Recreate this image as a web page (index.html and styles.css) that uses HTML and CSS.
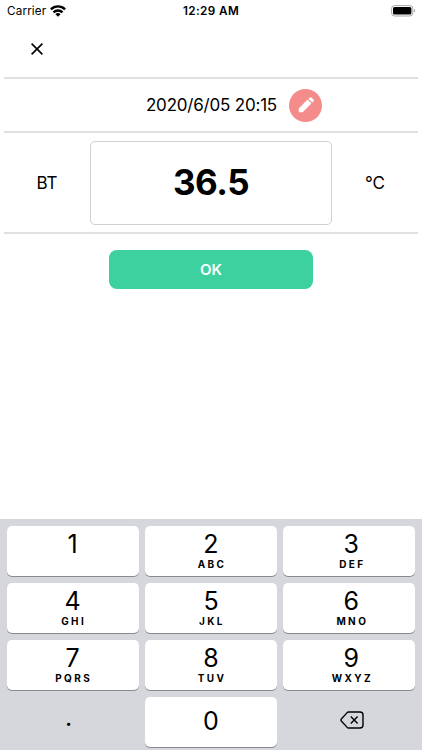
FILE: index.html
```html
<!DOCTYPE html>
<html lang="en">

<head>
    <meta charset="UTF-8">
    <meta name="viewport" content="width=device-width, initial-scale=1.0">
    <title>Body temperature</title>
    <link rel="stylesheet" href="styles.css">
</head>

<body>
    <div class="status">
        <div class="carrier">
            <span>Carrier</span>
            <svg width="16" height="12" viewBox="0 0 16 12" fill="none" stroke="#000" stroke-width="2.4">
                <path d="M.9 4.3a10.2 10.2 0 0 1 14.2 0" />
                <path d="M3.5 7.3a6.4 6.4 0 0 1 9 0" />
                <path d="M8 11.8L5.4 9.3a3.7 3.7 0 0 1 5.2 0z" fill="#000" stroke="none" />
            </svg>
        </div>
        <div class="time">12:29 AM</div>
        <div class="battery">
            <svg width="25" height="12" viewBox="0 0 25 12">
                <rect x=".6" y=".6" width="21.2" height="10.4" rx="3" fill="#fff" stroke="#a5a5a5" />
                <rect x="2" y="2" width="18.4" height="7.6" rx="1.6" fill="#000" />
                <path d="M23 4.1c1.6.6 1.6 2.9 0 3.5z" fill="#a5a5a5" />
            </svg>
        </div>
    </div>
    <div class="container">
        <div class="header">
            <button class="close" aria-label="Close">
                <svg width="12" height="12" viewBox="0 0 12 12" fill="none" stroke="#000" stroke-width="1.6">
                    <path d="M.6.6l10.8 10.8M11.4.6L.6 11.4" />
                </svg>
            </button>
        </div>
        <div class="date">
            <span>2020/6/05 20:15</span>
            <button class="edit" aria-label="Edit">
                <svg width="16" height="16" viewBox="0 0 16 16" fill="#fff">
                    <path d="M.8 11.4L9.6 2.6l3.8 3.8-8.8 8.8H.8z" />
                    <path d="M10.5 1.7l.9-.9a1.7 1.7 0 0 1 2.4 0l1.4 1.4a1.7 1.7 0 0 1 0 2.4l-.9.9z" />
                </svg>
            </button>
        </div>
        <div class="entry">
            <span class="label">BT</span>
            <div class="value">36.5</div>
            <span class="label">°C</span>
        </div>
        <button class="ok">OK</button>
    </div>
    <div class="keyboard">
        <button class="key">1</button>
        <button class="key">2<small>ABC</small></button>
        <button class="key right">3<small>DEF</small></button>
        <button class="key">4<small>GHI</small></button>
        <button class="key">5<small>JKL</small></button>
        <button class="key right">6<small>MNO</small></button>
        <button class="key">7<small>PQRS</small></button>
        <button class="key">8<small>TUV</small></button>
        <button class="key right">9<small>WXYZ</small></button>
        <button class="key plain dot">.</button>
        <button class="key zero">0</button>
        <button class="key plain delete" aria-label="Delete">
            <svg width="24" height="18" viewBox="0 0 24 18" fill="none" stroke="#000" stroke-width="1.4" stroke-linejoin="round">
                <path d="M8.6 1H20a3 3 0 0 1 3 3v10a3 3 0 0 1-3 3H8.6a2 2 0 0 1-1.4-.6L1.3 10a1.4 1.4 0 0 1 0-2l5.9-6.4A2 2 0 0 1 8.6 1z" />
                <path d="M10.8 5.6l6.8 6.8M17.6 5.6l-6.8 6.8" />
            </svg>
        </button>
    </div>
</body>

</html>
```
FILE: styles.css
```css
* {
    padding: 0;
    margin: 0;
    box-sizing: border-box;
}

body {
    height: 100vh;
    display: flex;
    flex-direction: column;
    overflow: hidden;
    background: #fff;
    color: #000;
    font-family: Inter, "Liberation Sans", sans-serif;
}

button {
    border: none;
    background: none;
    color: inherit;
    font-family: inherit;
    cursor: pointer;
}

svg {
    display: block;
}

.status {
    height: 22px;
    display: grid;
    grid-template-columns: 1fr auto 1fr;
    align-items: center;
    padding: 0 6px 0 7px;
    font-size: 11.7px;
}

.status .carrier {
    display: flex;
    align-items: center;
    gap: 4px;
    letter-spacing: 0.15px;
}

.status .time {
    padding-right: 1px;
    font-weight: 600;
    letter-spacing: 0.4px;
}

.status .battery {
    justify-self: end;
}

.container {
    flex: 1;
    display: flex;
    flex-direction: column;
    padding: 0 4px;
}

.container .header {
    height: 57px;
    display: flex;
    align-items: center;
    padding: 0 0 1px 26px;
    border-bottom: 2px solid #dfe0e2;
}

.container .close {
    padding: 1px;
}

.container .date {
    height: 54px;
    display: flex;
    align-items: center;
    justify-content: flex-end;
    gap: 12px;
    padding-right: 96px;
    border-bottom: 2px solid #dfe0e2;
    font-size: 17px;
    letter-spacing: -0.2px;
}

.container .edit {
    width: 33px;
    height: 33px;
    display: flex;
    align-items: center;
    justify-content: center;
    border-radius: 50%;
    background: #f48c8c;
}

.container .entry {
    height: 101px;
    display: grid;
    grid-template-columns: 86px 242px 86px;
    align-items: center;
    border-bottom: 2px solid #dfe0e2;
    text-align: center;
    font-size: 17px;
}

.container .entry .value {
    height: 84px;
    display: flex;
    align-items: center;
    justify-content: center;
    padding-bottom: 2px;
    border: 1px solid #d0d0d0;
    border-radius: 5px;
    font-size: 35px;
    font-weight: 700;
    letter-spacing: -0.5px;
}

.container .ok {
    width: 204px;
    height: 39px;
    margin: 16px auto 0;
    border-radius: 8px;
    background: #3dd1a0;
    color: #fff;
    font-size: 15px;
    font-weight: 600;
}

.keyboard {
    height: 231px;
    display: grid;
    grid-template-columns: repeat(3, 1fr);
    grid-auto-rows: 50px;
    gap: 7px 6px;
    padding: 6.5px 6.5px 0;
    background: #d6d7dd;
}

.keyboard .key {
    display: flex;
    flex-direction: column;
    align-items: center;
    padding-top: 3px;
    border-radius: 5px;
    background: #fff;
    box-shadow: 0 1px 0 #898a8d;
    font-size: 25px;
    line-height: 30px;
}

.keyboard .right {
    padding-left: 4px;
}

.keyboard .key small {
    padding-left: 2px;
    font-size: 10px;
    font-weight: 700;
    line-height: 10px;
    letter-spacing: 2.4px;
}

.keyboard .zero,
.keyboard .plain {
    justify-content: center;
    padding: 0 0 2px;
}

.keyboard .plain {
    background: none;
    box-shadow: none;
}

.keyboard .dot {
    padding: 0 8px 10px 0;
}

.keyboard .delete {
    padding: 0 0 3px 6px;
}
```
